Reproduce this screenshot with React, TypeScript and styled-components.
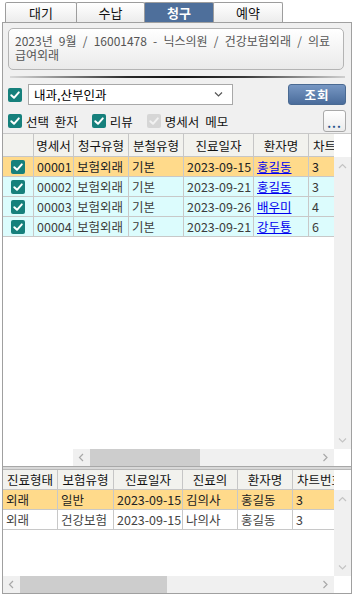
import React from "react";
import styled, { createGlobalStyle } from "styled-components";

const FONT = `"Noto Sans CJK KR", "Noto Sans", sans-serif`;

const GlobalStyle = createGlobalStyle`
  html, body { margin: 0; padding: 0; background: #ffffff; }
  body { font-family: ${FONT}; font-size: 12px; color: #000; word-spacing: 3px; }
  * { box-sizing: border-box; }
`;

const Screen = styled.div`
  width: 354px;
  height: 594px;
  display: flex;
  flex-direction: column;
  background: #ffffff;
  overflow: hidden;
`;

const TabBar = styled.div`
  height: 22px;
  flex: none;
  display: flex;
  align-items: flex-end;
  padding-left: 5px;
`;

const Tab = styled.div<{ $w: number; $active?: boolean }>`
  width: ${(p) => p.$w}px;
  height: 20px;
  margin-right: -1px;
  border: 1px solid #9d9d9d;
  border-bottom: none;
  border-radius: 2px 2px 0 0;
  background: ${(p) => (p.$active ? "#4e6f9b" : "linear-gradient(#ffffff, #ececec)")};
  color: ${(p) => (p.$active ? "#ffffff" : "#111111")};
  font-weight: ${(p) => (p.$active ? 700 : 400)};
  font-size: 13px;
  line-height: 19px;
  text-align: center;
`;

const Panel = styled.div`
  flex: 1;
  min-height: 0;
  margin: 0 2px;
  border: 1px solid #a0a0a0;
  background: #f0f0f0;
  display: flex;
  flex-direction: column;
`;

const InfoBox = styled.div`
  flex: none;
  margin: 5px 7px 0 5px;
  height: 42px;
  border: 1px solid #b4b4b4;
  border-radius: 5px;
  background: linear-gradient(#ffffff, #eaeaea);
  padding: 5px 5px 0 6px;
  color: #555555;
  font-size: 12px;
  line-height: 14px;
  word-spacing: 3.5px;
`;

const Separator = styled.div`
  flex: none;
  margin: 6px 6px 0 7px;
  height: 2px;
  background: linear-gradient(to right, #d8d8d8, #2a2a2a 35%, #111111 50%, #3a3a3a 70%, #d0d0d0);
`;

const ControlRow = styled.div<{ $h: number; $mt: number }>`
  flex: none;
  height: ${(p) => p.$h}px;
  margin-top: ${(p) => p.$mt}px;
  padding: 0 5px;
  display: flex;
  align-items: center;
`;

const Box = styled.span<{ $disabled?: boolean }>`
  flex: none;
  width: 14px;
  height: 14px;
  border-radius: 2px;
  background: ${(p) => (p.$disabled ? "#d6d6d6" : "#16807c")};
  display: inline-flex;
  align-items: center;
  justify-content: center;
`;

const CheckLabel = styled.label<{ $gap: number }>`
  display: flex;
  align-items: center;
  gap: 4px;
  margin-right: ${(p) => p.$gap}px;
  font-size: 12.5px;
  color: #111;
`;

const Select = styled.div`
  width: 205px;
  height: 21px;
  margin-left: 6px;
  border: 1px solid #a8a8a8;
  background: #ffffff;
  display: flex;
  align-items: center;
  justify-content: space-between;
  padding: 0 9px 0 5px;
  font-size: 12.5px;
  word-spacing: 0;
`;

const Spacer = styled.div`
  flex: 1;
`;

const QueryButton = styled.div`
  width: 58px;
  height: 21px;
  border: 1px solid #4a6a92;
  border-radius: 3px;
  background: linear-gradient(#7797c3, #4a6c9b);
  color: #ffffff;
  font-weight: 700;
  font-size: 12.5px;
  letter-spacing: 1px;
  display: flex;
  align-items: center;
  justify-content: center;
`;

const MoreButton = styled.div`
  width: 23px;
  height: 22px;
  border: 1px solid #a9a9a9;
  border-radius: 3px;
  background: linear-gradient(#ffffff, #ececec);
  color: #23508a;
  font-weight: 700;
  font-size: 12px;
  letter-spacing: 1px;
  display: flex;
  align-items: flex-end;
  justify-content: center;
  padding-bottom: 2px;
  line-height: 12px;
`;

const GridFrame = styled.div<{ $h: number; $top?: boolean }>`
  flex: none;
  height: ${(p) => p.$h}px;
  margin-top: ${(p) => (p.$top ? 1 : 0)}px;
  border-top: ${(p) => (p.$top ? "1px solid #c8c8c8" : "none")};
  background: #ffffff;
  display: flex;
  flex-direction: column;
`;

const GridMain = styled.div`
  flex: 1;
  min-height: 0;
  display: flex;
`;

const Viewport = styled.div`
  width: 331px;
  flex: none;
  overflow: hidden;
  display: flex;
  flex-direction: column;
`;

const HeaderRow = styled.div<{ $h: number }>`
  flex: none;
  height: ${(p) => p.$h}px;
  display: flex;
  white-space: nowrap;
`;

const HeaderCell = styled.div<{ $w: number }>`
  flex: none;
  width: ${(p) => p.$w}px;
  border-right: 1px solid #c6c6c6;
  border-bottom: 1px solid #c6c6c6;
  background: #f2f2ee;
  display: flex;
  align-items: center;
  justify-content: center;
  font-size: 12.5px;
  color: #111;
  overflow: hidden;
`;

const DataRow = styled.div<{ $bg: string; $fg: string }>`
  flex: none;
  height: 20px;
  display: flex;
  white-space: nowrap;
  background: ${(p) => p.$bg};
  color: ${(p) => p.$fg};
`;

const DataCell = styled.div<{ $w: number; $center?: boolean }>`
  flex: none;
  width: ${(p) => p.$w}px;
  border-right: 1px solid #c8c8c8;
  border-bottom: 1px solid #c8c8c8;
  display: flex;
  align-items: center;
  justify-content: ${(p) => (p.$center ? "center" : "flex-start")};
  padding-left: ${(p) => (p.$center ? 0 : 3)}px;
  font-size: 12.5px;
  overflow: hidden;
`;

const PatientLink = styled.span`
  color: #0000ee;
  text-decoration: underline;
`;

const VScrollCol = styled.div`
  width: 17px;
  flex: none;
  display: flex;
  flex-direction: column;
`;

const HeaderSpacer = styled.div<{ $h: number }>`
  height: ${(p) => p.$h}px;
  flex: none;
  background: #ffffff;
`;

const VTrack = styled.div`
  flex: 1;
  background: #f0f0f0;
  display: flex;
  flex-direction: column;
  justify-content: space-between;
  align-items: center;
  padding: 6px 0 5px;
`;

const HScrollRow = styled.div`
  height: 17px;
  flex: none;
  display: flex;
`;

const FrozenBlank = styled.div<{ $w: number }>`
  width: ${(p) => p.$w}px;
  flex: none;
  background: #ffffff;
`;

const HTrack = styled.div`
  flex: 1;
  background: #f0f0f0;
  display: flex;
  align-items: center;
  position: relative;
`;

const HThumb = styled.div`
  position: absolute;
  top: 0;
  bottom: 0;
  background: #cdcdcd;
`;

const ArrowSlot = styled.div<{ $right?: boolean }>`
  width: 17px;
  height: 17px;
  display: flex;
  align-items: center;
  justify-content: center;
  margin-left: ${(p) => (p.$right ? "auto" : "0")};
`;

const Corner = styled.div`
  width: 17px;
  flex: none;
  background: #ffffff;
`;

const Splitter = styled.div`
  flex: none;
  height: 4px;
  border-top: 1px solid #a8a8a8;
  border-bottom: 1px solid #b8b8b8;
  background: #d8d8d8;
`;

const CheckMark = ({ disabled }: { disabled?: boolean }) => (
  <Box $disabled={disabled}>
    <svg width="12" height="12" viewBox="0 0 12 12">
      <path
        d="M2.3 6.2 L5 8.8 L9.8 3.4"
        fill="none"
        stroke={disabled ? "#f2f2f2" : "#ffffff"}
        strokeWidth="2"
        strokeLinecap="round"
        strokeLinejoin="round"
      />
    </svg>
  </Box>
);

const Chevron = ({ dir, color = "#b4b4b4" }: { dir: "up" | "down" | "left" | "right"; color?: string }) => {
  const pts: Record<string, string> = {
    up: "1,5 4.5,1.5 8,5",
    down: "1,1.5 4.5,5 8,1.5",
    left: "5,1 1.5,4.5 5,8",
    right: "1.5,1 5,4.5 1.5,8",
  };
  const horiz = dir === "left" || dir === "right";
  return (
    <svg width={horiz ? 7 : 9} height={horiz ? 9 : 7} viewBox={horiz ? "0 0 7 9" : "0 0 9 7"}>
      <polyline points={pts[dir]} fill="none" stroke={color} strokeWidth="1.2" />
    </svg>
  );
};

type Row = { cells: React.ReactNode[]; bg: string; fg: string; check?: boolean };

type GridProps = {
  height: number;
  top?: boolean;
  headerH: number;
  widths: number[];
  headers: string[];
  rows: Row[];
  frozen: number;
  thumbLeft: number;
  thumbWidth: number;
};

const DataGrid = ({ height, top, headerH, widths, headers, rows, frozen, thumbLeft, thumbWidth }: GridProps) => (
  <GridFrame $h={height} $top={top}>
    <GridMain>
      <Viewport>
        <HeaderRow $h={headerH}>
          {headers.map((h, i) => (
            <HeaderCell key={i} $w={widths[i]}>
              {h}
            </HeaderCell>
          ))}
        </HeaderRow>
        {rows.map((r, ri) => (
          <DataRow key={ri} $bg={r.bg} $fg={r.fg}>
            {r.cells.map((c, ci) => (
              <DataCell key={ci} $w={widths[ci]} $center={r.check && ci === 0}>
                {c}
              </DataCell>
            ))}
          </DataRow>
        ))}
      </Viewport>
      <VScrollCol>
        <HeaderSpacer $h={headerH} />
        <VTrack>
          <Chevron dir="up" color="#c4c4c4" />
          <Chevron dir="down" color="#c4c4c4" />
        </VTrack>
      </VScrollCol>
    </GridMain>
    <HScrollRow>
      {frozen > 0 && <FrozenBlank $w={frozen} />}
      <HTrack>
        <ArrowSlot>
          <Chevron dir="left" color="#a8a8a8" />
        </ArrowSlot>
        <HThumb style={{ left: thumbLeft, width: thumbWidth }} />
        <ArrowSlot $right>
          <Chevron dir="right" color="#a8a8a8" />
        </ArrowSlot>
      </HTrack>
      <Corner />
    </HScrollRow>
  </GridFrame>
);

const ORANGE = "#ffda8b";
const CYAN = "#dcfcfd";

const claimRows: Row[] = [
  ["00001", "보험외래", "기본", "2023-09-15", "홍길동", "3"],
  ["00002", "보험외래", "기본", "2023-09-21", "홍길동", "3"],
  ["00003", "보험외래", "기본", "2023-09-26", "배우미", "4"],
  ["00004", "보험외래", "기본", "2023-09-21", "강두툥", "6"],
].map((r, i) => ({
  check: true,
  bg: i === 0 ? ORANGE : CYAN,
  fg: i === 0 ? "#222222" : "#3c3c3c",
  cells: [<CheckMark key="c" />, r[0], r[1], r[2], r[3], <PatientLink key="l">{r[4]}</PatientLink>, r[5]],
}));

const visitRows: Row[] = [
  { bg: ORANGE, fg: "#222222", cells: ["외래", "일반", "2023-09-15", "김의사", "홍길동", "3"] },
  { bg: "#ffffff", fg: "#444444", cells: ["외래", "건강보험", "2023-09-15", "나의사", "홍길동", "3"] },
];

export default function App() {
  return (
    <>
      <GlobalStyle />
      <Screen>
        <TabBar>
          <Tab $w={72}>대기</Tab>
          <Tab $w={69}>수납</Tab>
          <Tab $w={70} $active>
            청구
          </Tab>
          <Tab $w={70}>예약</Tab>
        </TabBar>
        <Panel>
          <InfoBox>2023년 9월 / 16001478 - 닉스의원 / 건강보험외래 / 의료급여외래</InfoBox>
          <Separator />
          <ControlRow $h={21} $mt={6}>
            <CheckMark />
            <Select>
              <span>내과,산부인과</span>
              <Chevron dir="down" color="#555555" />
            </Select>
            <Spacer />
            <QueryButton>조회</QueryButton>
          </ControlRow>
          <ControlRow $h={22} $mt={5}>
            <CheckLabel $gap={14}>
              <CheckMark />
              선택 환자
            </CheckLabel>
            <CheckLabel $gap={14}>
              <CheckMark />
              리뷰
            </CheckLabel>
            <CheckLabel $gap={0}>
              <CheckMark disabled />
              명세서 메모
            </CheckLabel>
            <Spacer />
            <MoreButton>...</MoreButton>
          </ControlRow>
          <DataGrid
            top
            height={333}
            headerH={23}
            widths={[31, 40, 55, 55, 70, 55, 55]}
            headers={["", "명세서", "청구유형", "분철유형", "진료일자", "환자명", "차트번호"]}
            rows={claimRows}
            frozen={70}
            thumbLeft={17}
            thumbWidth={110}
          />
          <Splitter />
          <DataGrid
            height={123}
            headerH={20}
            widths={[55, 56, 69, 55, 55, 55]}
            headers={["진료형태", "보험유형", "진료일자", "진료의", "환자명", "차트번호"]}
            rows={visitRows}
            frozen={0}
            thumbLeft={17}
            thumbWidth={147}
          />
        </Panel>
      </Screen>
    </>
  );
}
